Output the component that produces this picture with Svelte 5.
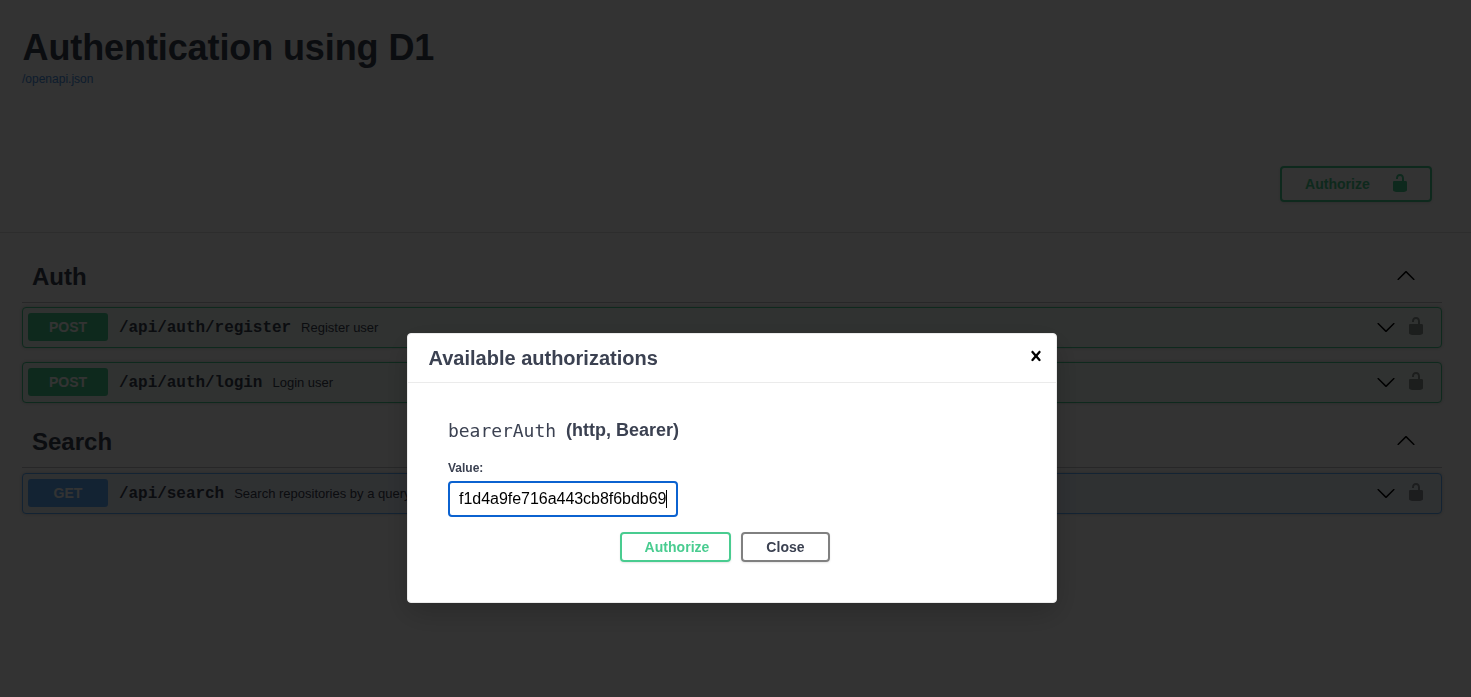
<script>
  const sections = [
    {
      name: 'Auth',
      operations: [
        { method: 'POST', path: '/api/auth/register', summary: 'Register user' },
        { method: 'POST', path: '/api/auth/login', summary: 'Login user' }
      ]
    },
    {
      name: 'Search',
      operations: [
        { method: 'GET', path: '/api/search', summary: 'Search repositories by a query' }
      ]
    }
  ];
  const token = 'f1d4a9fe716a443cb8f6bdb69';
</script>

{#snippet unlocked()}
  <svg class="lock" viewBox="0 0 20 20" width="20" height="20" aria-hidden="true">
    <path d="M15.8 8H14V5.6C14 2.703 12.665 1 10 1 7.334 1 6 2.703 6 5.6V6h2v-.801C8 3.754 8.797 3 10 3c1.203 0 2 .754 2 2.199V8H4c-.553 0-1 .646-1 1.199V17c0 .549.428 1.139.951 1.307l1.197.387C5.672 18.861 6.55 19 7.1 19h5.8c.549 0 1.428-.139 1.951-.307l1.196-.387c.524-.167.953-.757.953-1.306V9.199C17 8.646 16.352 8 15.8 8z" />
  </svg>
{/snippet}

<div class="page">
  <header class="info">
    <h1>Authentication using D1</h1>
    <a href="#spec">/openapi.json</a>
  </header>

  <div class="schemes">
    <button class="btn authorize top">
      <span>Authorize</span>
      {@render unlocked()}
    </button>
  </div>

  <main>
    {#each sections as section}
      <section>
        <h2>
          <span>{section.name}</span>
          <svg viewBox="0 0 20 20" width="20" height="20" aria-hidden="true">
            <path d="M17.418 14.908c.272.268.709.268.979 0s.271-.701 0-.969l-7.908-7.831c-.27-.267-.707-.267-.979 0l-7.908 7.831c-.27.268-.27.701 0 .969.271.268.709.268.979 0L10 7.767z" />
          </svg>
        </h2>
        {#each section.operations as op}
          <div class="op {op.method.toLowerCase()}">
            <span class="method">{op.method}</span>
            <span class="path">{op.path}</span>
            <span class="summary">{op.summary}</span>
            <svg class="arrow" viewBox="0 0 20 20" width="20" height="20" aria-hidden="true">
              <path d="M17.418 6.109c.272-.268.709-.268.979 0s.271.701 0 .969l-7.908 7.83c-.27.268-.707.268-.979 0l-7.908-7.83c-.27-.268-.27-.701 0-.969.271-.268.709-.268.979 0L10 13.25z" />
            </svg>
            {@render unlocked()}
          </div>
        {/each}
      </section>
    {/each}
  </main>
</div>

<div class="backdrop">
  <div class="modal" role="dialog" aria-label="Available authorizations">
    <div class="modal-head">
      <h3>Available authorizations</h3>
      <svg viewBox="0 0 20 20" width="20" height="20" aria-hidden="true">
        <path d="M14.348 14.849c-.469.469-1.229.469-1.697 0L10 11.819l-2.651 3.029c-.469.469-1.229.469-1.697 0-.469-.469-.469-1.229 0-1.697l2.758-3.15-2.759-3.152c-.469-.469-.469-1.228 0-1.697.469-.469 1.228-.469 1.697 0L10 8.183l2.651-3.031c.469-.469 1.228-.469 1.697 0 .469.469.469 1.229 0 1.697l-2.758 3.152 2.758 3.15c.469.469.469 1.229 0 1.698z" />
      </svg>
    </div>
    <div class="modal-body">
      <h4><code>bearerAuth</code><span>(http, Bearer)</span></h4>
      <div class="label">Value:</div>
      <div class="field"><span>{token}</span><i class="caret"></i></div>
      <div class="actions">
        <button class="btn authorize">Authorize</button>
        <button class="btn close">Close</button>
      </div>
    </div>
  </div>
</div>

<style>
  :global(body) {
    background: #fcfcfc;
    overflow: hidden;
  }

  .page,
  .backdrop {
    font-family: 'Liberation Sans', Arial, sans-serif;
    color: #3b4151;
    box-sizing: border-box;
  }

  .page * ,
  .backdrop * {
    box-sizing: border-box;
  }

  .page {
    height: 697px;
    overflow: hidden;
  }

  h1, h2, h3, h4 {
    margin: 0;
  }

  .info {
    height: 135px;
    padding: 27px 22px 0;
  }

  h1 {
    padding-left: 0.5px;
    font-size: 36px;
    line-height: 42px;
    letter-spacing: -0.1px;
    white-space: nowrap;
  }

  .info a {
    display: block;
    margin-top: 3px;
    font-size: 12px;
    line-height: 14px;
    color: #4990e2;
    text-decoration: none;
  }

  .schemes {
    height: 98px;
    padding: 31px 39px 0 0;
    display: flex;
    justify-content: flex-end;
    align-items: flex-start;
    border-bottom: 1px solid #e0e0e0;
  }

  .btn {
    display: flex;
    align-items: center;
    justify-content: center;
    padding: 0;
    border: 2px solid #808080;
    border-radius: 4px;
    background: transparent;
    box-shadow: 0 1px 2px rgba(0, 0, 0, 0.1);
    font: bold 14px 'Liberation Sans', Arial, sans-serif;
    letter-spacing: 0.03px;
    color: #3b4151;
  }

  .btn.authorize {
    border-color: #49cc90;
    color: #49cc90;
  }

  .btn.top {
    width: 152px;
    height: 36px;
    padding: 0 20px 0 23px;
    justify-content: space-between;
  }

  .btn .lock {
    margin-top: -2px;
    fill: #49cc90;
  }

  main {
    width: 1420px;
    margin-left: 22px;
    padding-top: 18px;
  }

  h2 {
    height: 52px;
    margin-bottom: 4px;
    padding: 0 26px 0 10px;
    display: flex;
    align-items: center;
    justify-content: space-between;
    border-bottom: 1px solid rgba(59, 65, 81, 0.3);
    font-size: 24px;
    line-height: 28px;
  }

  section + section h2 {
    margin-bottom: 5px;
  }

  h2 svg {
    margin-top: -4px;
  }

  .op {
    height: 41px;
    margin-bottom: 14px;
    padding: 0 15px 1px 5px;
    display: flex;
    align-items: center;
    border: 1px solid #49cc90;
    border-radius: 4px;
    background: #edf9f3;
    box-shadow: 0 0 3px rgba(0, 0, 0, 0.19);
  }

  .op:last-child {
    margin-bottom: 13px;
  }

  .op.get {
    border-color: #61affe;
    background: #ebf3fb;
  }

  .method {
    width: 80px;
    height: 28px;
    border-radius: 3px;
    background: #49cc90;
    color: #fff;
    font-size: 14px;
    font-weight: bold;
    line-height: 28px;
    text-align: center;
  }

  .get .method {
    background: #61affe;
  }

  .path {
    margin: 1px 10px 0 11px;
    font: bold 16px 'Liberation Mono', 'Courier New', monospace;
    letter-spacing: -0.04px;
  }

  .summary {
    flex: 1;
    font-size: 13px;
  }

  .arrow {
    margin-right: 10px;
  }

  .op .lock {
    margin-top: -2px;
    opacity: 0.4;
  }

  .backdrop {
    position: fixed;
    inset: 0;
    padding-top: 333px;
    background: rgba(0, 0, 0, 0.8);
  }

  .modal {
    width: 650px;
    height: 270px;
    margin-left: 407px;
    border: 1px solid #ebebeb;
    border-radius: 4px;
    background: #fff;
    box-shadow: 0 10px 30px rgba(0, 0, 0, 0.2);
  }

  .modal-head {
    height: 49px;
    padding: 0 10px 0 20.5px;
    display: flex;
    align-items: center;
    justify-content: space-between;
    border-bottom: 1px solid #ebebeb;
  }

  h3 {
    font-size: 20px;
    line-height: 24px;
  }

  .modal-head svg {
    margin-top: -4px;
  }

  .modal-body {
    padding: 35px 40px 0;
  }

  h4 {
    height: 24px;
    display: flex;
    align-items: center;
    font-size: 18px;
  }

  code {
    width: 118px;
    font: 18px 'DejaVu Sans Mono', monospace;
    letter-spacing: -0.04px;
  }

  .label {
    margin-top: 19px;
    font-size: 12px;
    font-weight: bold;
    line-height: 14px;
  }

  .field {
    width: 230px;
    height: 36px;
    margin-top: 6px;
    padding-left: 9px;
    display: flex;
    align-items: center;
    border: 2px solid #0b62d0;
    border-radius: 4px;
    color: #000;
    font-size: 16px;
  }

  .field span {
    letter-spacing: -0.03px;
  }

  .caret {
    width: 1px;
    height: 18px;
    background: #000;
  }

  .actions {
    margin-top: 15px;
    padding-right: 14px;
    display: flex;
    justify-content: center;
    gap: 10px;
  }

  .actions .authorize {
    width: 111px;
    height: 30px;
    padding-left: 3px;
  }

  .actions .close {
    width: 89px;
    height: 30px;
  }
</style>
